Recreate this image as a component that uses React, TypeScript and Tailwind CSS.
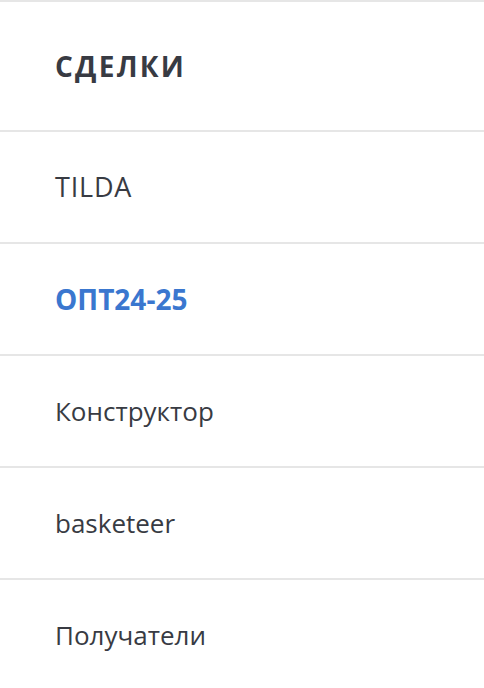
export default function App() {
  const items = [
    { label: "TILDA", active: false },
    { label: "ОПТ24-25", active: true },
    { label: "Конструктор", active: false },
    { label: "basketeer", active: false },
    { label: "Получатели", active: false },
  ];

  return (
    <div className="w-[484px] h-[688px] overflow-hidden bg-white border-t-2 border-[#e6e6e6] font-['Open_Sans',sans-serif]">
      <div className="h-[130px] flex items-center px-[55px] border-b-2 border-[#e6e6e6]">
        <h2 className="text-[28px] font-bold tracking-[0.08em] text-[#383b43]">СДЕЛКИ</h2>
      </div>
      {items.map((item) => (
        <div
          key={item.label}
          className="h-[112px] flex items-center px-[55px] border-b-2 border-[#e6e6e6]"
        >
          <span
            className={
              item.active
                ? "text-[28px] font-bold text-[#3a77cf]"
                : item.label === "TILDA"
                ? "text-[27px] tracking-[0.03em] text-[#383b43]"
                : "text-[26px] text-[#383b43]"
            }
          >
            {item.label}
          </span>
        </div>
      ))}
    </div>
  );
}
